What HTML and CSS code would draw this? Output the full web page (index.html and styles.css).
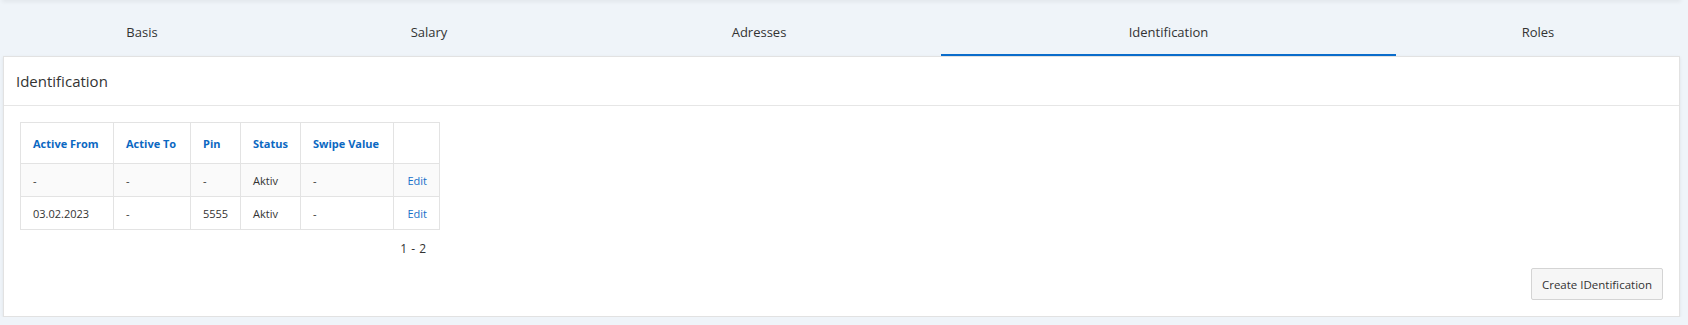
FILE: index.html
```html
<!DOCTYPE html>
<html>
  <head>
    <meta charset="UTF-8">
    <title>Identification</title>
    <link rel="stylesheet" href="styles.css">
  </head>
  <body>
    <div class="page">
      <div class="topshade"></div>
      <nav class="tabs">
        <a class="tab">Basis</a>
        <a class="tab">Salary</a>
        <a class="tab">Adresses</a>
        <a class="tab active">Identification</a>
        <a class="tab">Roles</a>
      </nav>

      <div class="card">
        <div class="card-header">Identification</div>
        <div class="card-body">
          <div class="grid">
            <table>
              <colgroup>
                <col class="c-from">
                <col class="c-to">
                <col class="c-pin">
                <col class="c-status">
                <col class="c-swipe">
                <col class="c-edit">
              </colgroup>
              <thead>
                <tr>
                  <th>Active From</th>
                  <th>Active To</th>
                  <th>Pin</th>
                  <th>Status</th>
                  <th>Swipe Value</th>
                  <th></th>
                </tr>
              </thead>
              <tbody>
                <tr class="odd">
                  <td>-</td>
                  <td>-</td>
                  <td>-</td>
                  <td>Aktiv</td>
                  <td>-</td>
                  <td class="edit"><a>Edit</a></td>
                </tr>
                <tr>
                  <td>03.02.2023</td>
                  <td>-</td>
                  <td>5555</td>
                  <td>Aktiv</td>
                  <td>-</td>
                  <td class="edit"><a>Edit</a></td>
                </tr>
              </tbody>
            </table>
            <div class="pager">1 - 2</div>
          </div>
          <div class="actions">
            <button type="button" class="btn">Create IDentification</button>
          </div>
        </div>
      </div>
    </div>
  </body>
</html>
```

FILE: styles.css
```css
body, html {
  margin: 0;
}

body {
  background: #eff4f9;
  font-family: "Open Sans", "Noto Sans", sans-serif;
  color: #333;
}

.page {
  padding: 0 8px 0 3px;
  position: relative;
}

.topshade {
  height: 0;
  box-shadow: 0 0 4px 1px rgba(0, 0, 0, 0.12);
}

.tabs {
  display: grid;
  grid-template-columns: 278fr 296fr 364fr 455fr 284fr;
  height: 56px;
}

.tab {
  box-sizing: border-box;
  height: 56px;
  padding-top: 10px;
  line-height: 44px;
  text-align: center;
  font-size: 13px;
  color: #333;
  border-bottom: 2px solid transparent;
}

.tab.active {
  border-bottom-color: #0a6ccb;
}

.card {
  background: #fff;
  border: 1px solid #e2e2e2;
  box-shadow: 0 1px 3px rgba(0, 0, 0, 0.08);
}

.card-header {
  height: 48px;
  line-height: 48px;
  padding: 0 12px;
  font-size: 15px;
  border-bottom: 1px solid #e6e6e6;
}

.card-body {
  padding: 16px;
}

.grid {
  width: 419px;
}

table {
  border-collapse: collapse;
  table-layout: fixed;
  width: 419px;
  font-size: 11px;
}

.c-from { width: 93px; }
.c-to { width: 77px; }
.c-pin { width: 50px; }
.c-status { width: 60px; }
.c-swipe { width: 93px; }
.c-edit { width: 46px; }

th, td {
  border: 1px solid #e3e3e3;
  padding: 0 12px;
  text-align: left;
  white-space: nowrap;
}

th {
  height: 40px;
  color: #0b68c2;
  font-weight: bold;
}

td {
  height: 32px;
}

tr.odd td {
  background: #fafafa;
}

td.edit {
  text-align: right;
}

td.edit a {
  color: #1670c9;
}

.pager {
  text-align: right;
  padding: 10px 13px 0 0;
  line-height: 18px;
  font-size: 12px;
  word-spacing: 1px;
  color: #333;
}

.actions {
  display: flex;
  justify-content: flex-end;
  margin-top: 10px;
}

.btn {
  height: 32px;
  width: 132px;
  background: #f6f6f6;
  border: 1px solid #d4d4d4;
  border-radius: 2px;
  font-family: "Open Sans", "Noto Sans", sans-serif;
  font-size: 11.5px;
  color: #333;
  padding: 0;
}
```
